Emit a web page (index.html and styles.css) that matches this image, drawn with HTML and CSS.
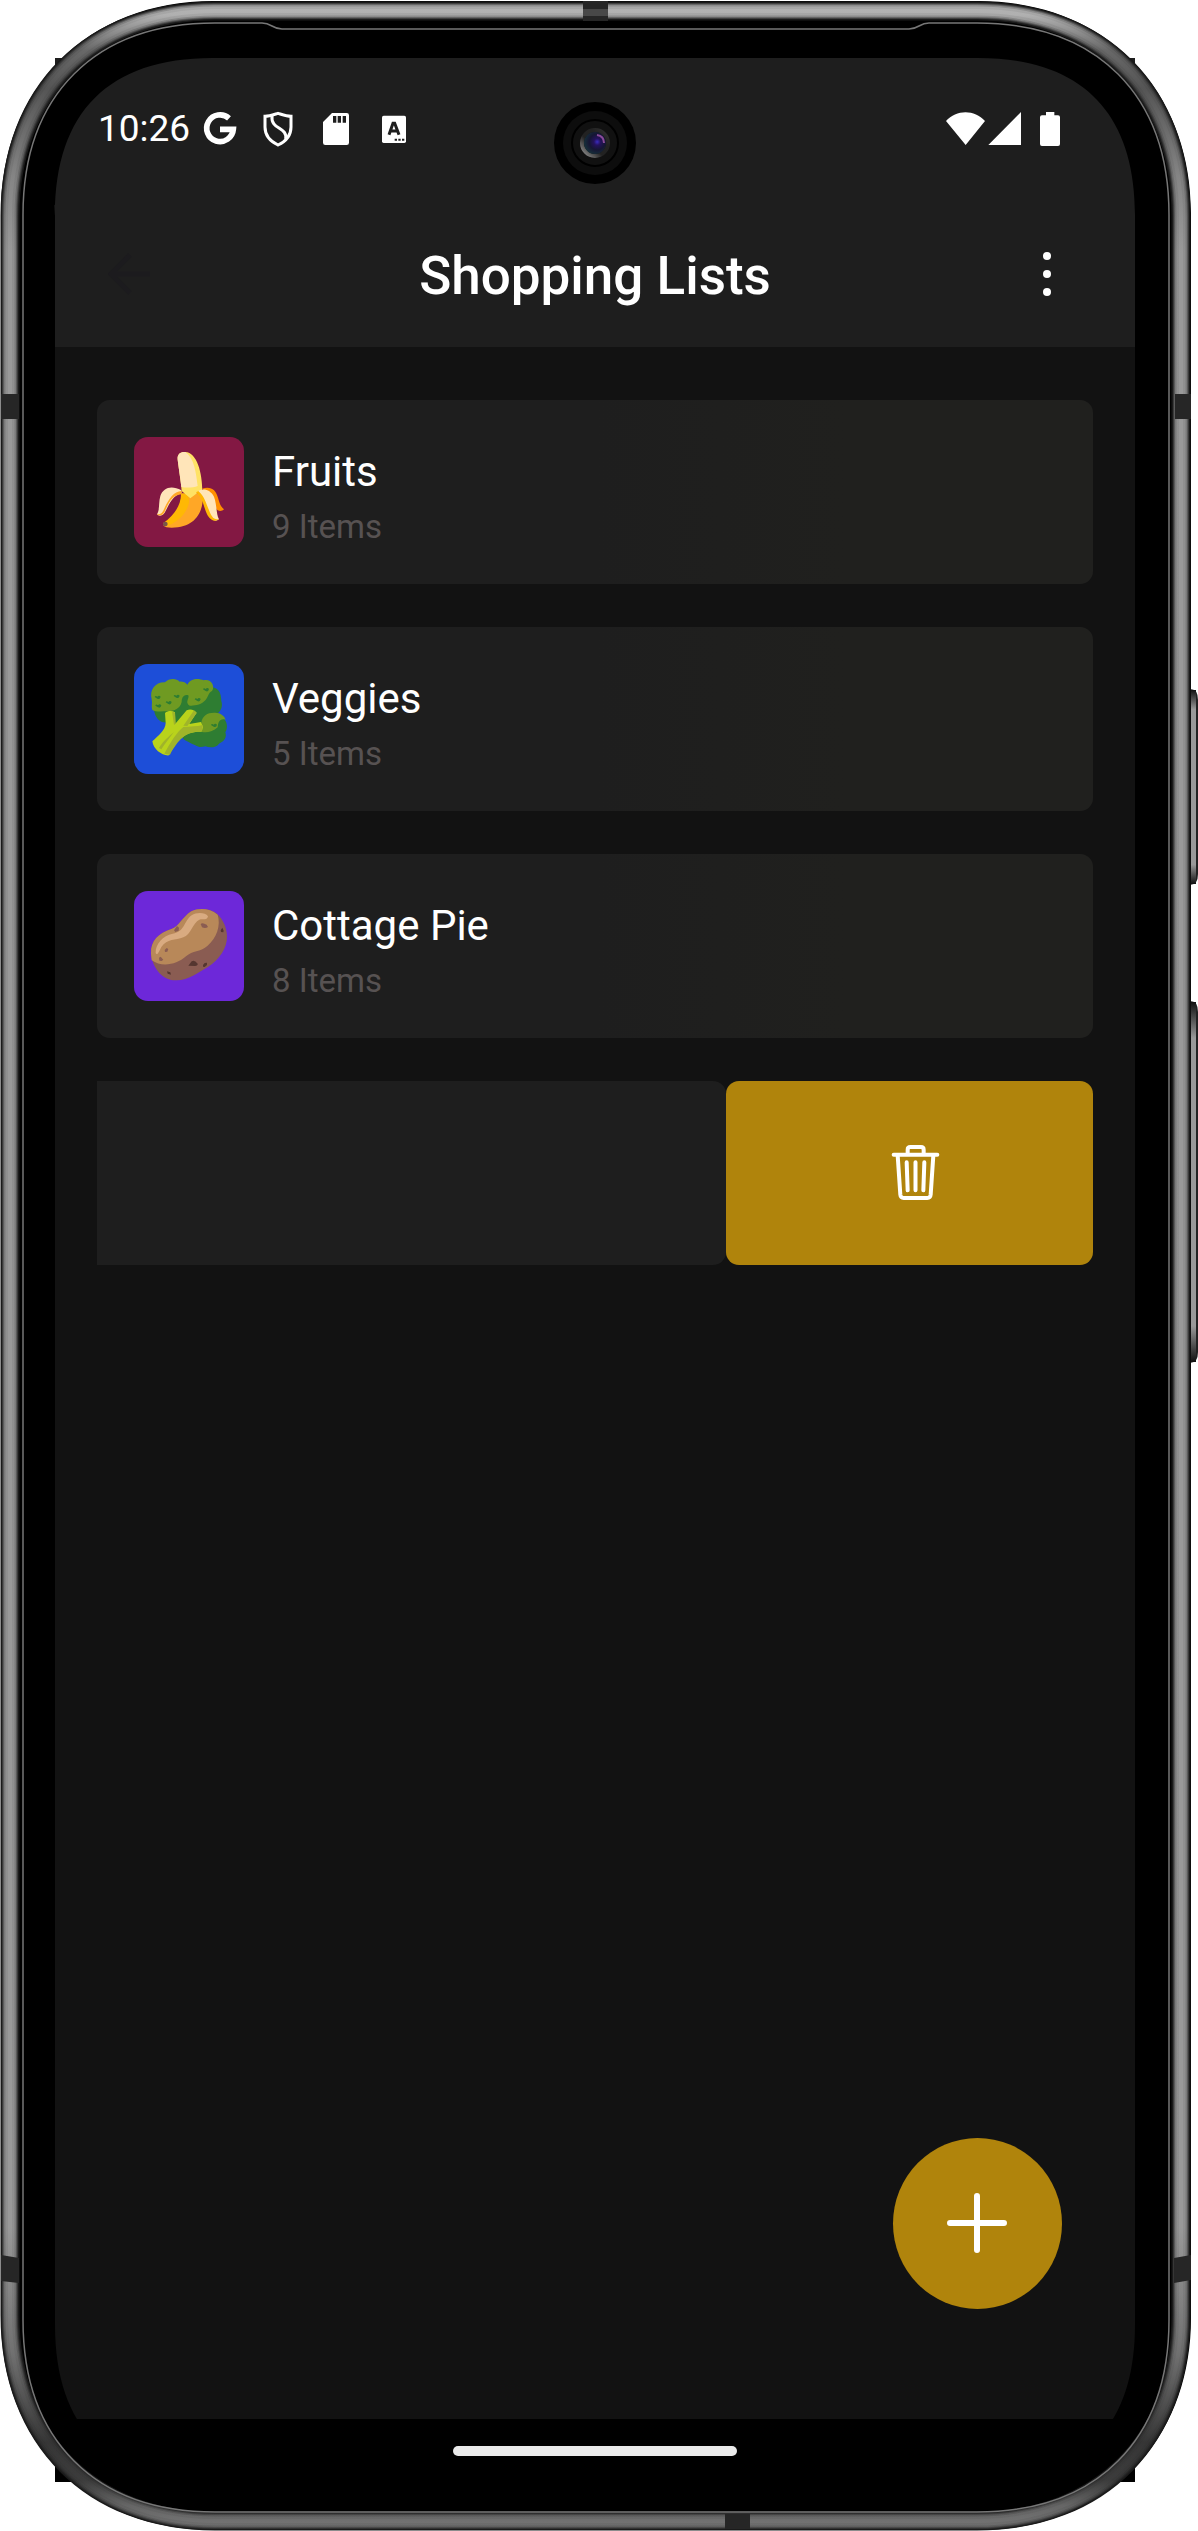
FILE: index.html
```html
<!DOCTYPE html>
<html lang="en">
<head>
<meta charset="utf-8">
<meta name="viewport" content="width=device-width, initial-scale=1">
<title>Shopping Lists</title>
<link rel="stylesheet" href="styles.css">
</head>
<body>
<div class="phone">
  <div class="screen">
    <header class="header">
      <div class="status">
        <time class="clock">10:26</time>
        <div class="status-icons">
          <svg class="status-icon" viewBox="606 333 108 108" aria-hidden="true"><path d="M687 355A40 40 0 1 0 700 388H660" fill="none" stroke="#fff" stroke-width="17"/></svg>
          <svg class="status-icon" viewBox="781 334 108 108" aria-hidden="true"><g fill="none" stroke="#fff" stroke-width="9"><path d="M835 341C822 345 809 350 796 350V382C796 408 814 426 835 436C857 426 874 408 874 382V350C861 350 848 345 835 341Z"/><path d="M817 347C812 392 864 380 858 418"/></g></svg>
          <svg class="status-icon" viewBox="954 333 108 108" aria-hidden="true"><path fill="#fff" fill-rule="evenodd" d="M996 339H1040Q1047 339 1047 346V428Q1047 435 1040 435H976Q969 435 969 428V366ZM999 348V368H1009V348ZM1013 348V368H1023V348ZM1028 348V368H1038V348Z"/></svg>
          <svg class="status-icon" viewBox="18 47 108 108" aria-hidden="true"><rect x="36" y="61" width="72" height="82" rx="5" fill="#fff"/><path d="M57 118L69 84H74L87 118M62 107H82" fill="none" stroke="#1e1e1e" stroke-width="9"/><path d="M74 130h7v6h-7zM85 130h7v6h-7zM96 130h7v6h-7z" fill="#1e1e1e"/></svg>
        </div>
        <svg class="signals" viewBox="444 333 342 108" aria-hidden="true"><path fill="#fff" d="M444 363C475 328 530 328 561 363L503 435ZM669 336V435H571ZM744 336H769V346H780Q786 346 786 352V432Q786 438 780 438H732Q726 438 726 432V352Q726 346 732 346H744Z"/></svg>
      </div>
      <div class="appbar">
        <button class="bar-button" type="button" aria-label="Back"><svg class="back-icon" viewBox="0 0 42 42" aria-hidden="true"><path d="M42 21H4M22 2L3 21L22 40" fill="none" stroke="#1c1b1e" stroke-width="5"/></svg></button>
        <h1 class="title">Shopping Lists</h1>
        <button class="bar-button bar-button-end" type="button" aria-label="More options"><svg class="more-icon" viewBox="0 0 10 46" aria-hidden="true"><g fill="#fff"><circle cx="5" cy="5" r="4"/><circle cx="5" cy="23" r="4"/><circle cx="5" cy="41" r="4"/></g></svg></button>
      </div>
    </header>

    <main class="content">
      <ul class="lists">
        <li class="card">
          <svg class="tile tile-fruits" viewBox="162 171 330 330" role="img" aria-label="Banana">
            <path d="M366 326C393 318 407 329 414 353C419 369 420 377 432 388C425 396 412 394 408 385L391 347Z" fill="#ff8f00"/>
            <path d="M303 340L368 340C372 385 354 443 275 443C263 443 254 442 250 436C284 414 303 384 305 340Z" fill="#ffa726"/>
            <path d="M303 342C321 337 331 351 326 372C318 403 291 428 260 438L249 430C280 407 303 379 303 342Z" fill="#ffb804"/>
            <path d="M293 239C291 222 302 215 316 216C351 218 367 278 367 335L353 338L331 355L305 333C303 302 296 266 293 239Z" fill="#ffe265"/>
            <path d="M293 239C291 222 302 215 316 216C344 236 348 280 353 318C341 323 318 324 304 321Z" fill="#ffe5b9"/>
            <path d="M304 331C275 315 250 322 241 348C235 370 240 388 231 403C236 410 248 408 254 398C268 374 276 347 305 340Z" fill="#ffe5b9"/>
            <path d="M232 405C250 410 253 397 259 384C269 362 281 344 305 343V333C281 334 267 357 255 381C249 395 244 405 232 402Z" fill="#ffa726"/>
            <path d="M352 335C368 322 391 328 402 350C411 374 408 402 417 418C407 426 396 421 389 409C378 383 371 350 352 335Z" fill="#ffe5b9"/>
            <path d="M348 337L355 333C378 352 382 387 396 409C402 418 409 419 416 417C409 426 393 423 384 408C372 389 370 353 348 337Z" fill="#ffb804"/>
            <circle cx="256" cy="432" r="7" fill="#795548"/>
          </svg>
          <div class="card-text"><h2 class="card-title">Fruits</h2><p class="card-count">9 Items</p></div>
        </li>
        <li class="card">
          <svg class="tile tile-veggies" viewBox="162 162 330 330" role="img" aria-label="Broccoli">
            <path d="M222 300C226 326 242 341 264 337L314 390C330 398 336 402 346 406C357 414 368 411 376 409C390 414 409 413 417 401C434 394 441 381 436 367C445 352 441 335 430 324L411 311C423 304 429 289 424 273C423 249 417 235 397 232L260 250Z" fill="#2e7d32"/>
            <path d="M215 268C208 239 226 216 255 217C265 205 289 203 299 215C308 214 317 218 322 224C332 204 356 204 371 211C391 204 407 227 396 243C384 249 385 261 376 271C365 284 344 288 329 287C313 278 329 265 325 256C310 251 305 265 305 276C300 297 280 304 263 304C244 304 226 306 217 300C213 289 218 279 215 268Z" fill="#6f9a22"/>
            <path d="M364 339C366 316 384 307 405 308C422 308 434 318 437 329C419 323 414 338 413 352C399 366 380 369 366 366Z" fill="#6f9a22"/>
            <path d="M217 394C235 377 256 361 257 339L255 309C265 301 276 302 285 307L286 341L320 301C331 295 344 300 350 308L328 342L363 336L369 351L365 365C314 363 292 389 267 436C246 438 220 418 217 394Z" fill="#b9d31b"/>
            <path d="M276 304L285 308L287 341L282 345ZM342 301L350 309L322 348L310 347ZM310 351C330 349 350 350 368 345L366 364C315 365 295 389 270 434L253 431C270 400 290 366 310 351ZM237 414C249 392 269 378 282 365C269 385 256 397 244 418Z" fill="#a0b42a"/>
            <g fill="#2e7d32"><path id="floret" d="M224 261Q226 255 232 260Q237 254 242 260Q240 270 232 266Z"/><use href="#floret" x="57" y="-3"/><use href="#floret" x="33" y="16"/><use href="#floret" x="2" y="26"/><use href="#floret" x="120" y="7"/><use href="#floret" x="145" y="-23"/><use href="#floret" x="169" y="84"/></g>
          </svg>
          <div class="card-text"><h2 class="card-title">Veggies</h2><p class="card-count">5 Items</p></div>
        </li>
        <li class="card">
          <svg class="tile tile-pie" viewBox="162 150 330 330" role="img" aria-label="Potato">
            <path d="M213 338C211 299 236 276 274 264C298 256 306 229 334 211C356 200 389 201 409 217C432 237 440 263 441 285C442 322 418 355 384 378C352 395 327 418 290 418C253 420 219 388 213 338Z" fill="#8a5c52"/>
            <path d="M213 338C211 299 236 276 274 264C298 256 306 229 334 211C356 200 389 201 413 221C423 254 410 290 382 315C360 334 338 328 318 346C290 371 246 380 215 358Z" fill="#b88859"/>
            <path d="M227 335C226 309 249 284 278 278C315 273 311 240 335 223C350 213 376 214 384 226C382 239 369 233 358 236C338 245 333 281 310 289C286 299 262 292 244 318Q236 335 233 338Q228 341 227 335Z" fill="#d9ab81"/>
            <path d="M282 268L291 255L297 260L296 269L286 273ZM362 249Q367 243 380 251L384 258Q376 264 366 259ZM254 327L260 321L265 324L262 332L255 333ZM237 350L242 347L250 356L245 360L238 359Z" fill="#8a5c52"/>
            <path d="M325 374L335 361Q343 355 353 368Q354 374 345 375ZM369 372L374 366L381 365L381 372L374 378L369 377ZM261 391L271 394L273 401L263 398ZM422 268L427 260L431 269L430 274L423 273Z" fill="#553630"/>
          </svg>
          <div class="card-text"><h2 class="card-title">Cottage Pie</h2><p class="card-count">8 Items</p></div>
        </li>
        <li class="swiped">
          <div class="swiped-card"></div>
          <button class="delete" type="button" aria-label="Delete list"><svg class="trash" viewBox="633 309 147 171" aria-hidden="true"><g fill="none" stroke="#fff" stroke-width="12" stroke-linecap="round" stroke-linejoin="round"><path d="M641 341H772M683 338V326Q683 318 691 318H723Q731 318 731 326V338M653 343L661 461Q662 471 671 471H742Q751 471 752 461L760 343M680 364L683 448M706.500 364V448M733 364L730 448"/></g></svg></button>
        </li>
      </ul>
      <button class="add" type="button" aria-label="Add list"><svg class="plus" viewBox="0 0 60 60" aria-hidden="true"><path d="M30 3V57M3 30H57" stroke="#fff" stroke-width="6" stroke-linecap="round"/></svg></button>
    </main>
    <div class="navbar"><div class="handle"></div></div>
  </div>

  <svg class="frame" viewBox="0 0 1198 2531" preserveAspectRatio="none" aria-hidden="true">
    <defs>
      <linearGradient id="metal" gradientUnits="userSpaceOnUse" x1="0" y1="0" x2="0" y2="2531">
        <stop offset="0" stop-color="#b4b4b4"/><stop offset=".006" stop-color="#b0b0b0"/><stop offset=".02" stop-color="#686868"/><stop offset=".035" stop-color="#555"/><stop offset=".07" stop-color="#858585"/><stop offset=".1" stop-color="#999"/><stop offset=".88" stop-color="#999"/><stop offset=".93" stop-color="#707070"/><stop offset=".965" stop-color="#363636"/><stop offset=".98" stop-color="#3c3c3c"/><stop offset=".99" stop-color="#666"/><stop offset="1" stop-color="#777"/>
      </linearGradient>
      <linearGradient id="key" x1="0" x2="0" y1="0" y2="1"><stop offset="0" stop-color="#111"/><stop offset=".1" stop-color="#999"/><stop offset=".9" stop-color="#999"/><stop offset="1" stop-color="#111"/></linearGradient>
      <path id="rim" d="M215 11H977C1101 11 1181 92 1181 216V2315C1181 2439 1101 2521 977 2521H215C91 2521 10 2439 10 2315V216C10 92 91 11 215 11Z"/>
    </defs>
    <path d="M1190 689Q1198 689 1198 700V874Q1198 885 1190 885ZM1190 1001Q1198 1001 1198 1012V1352Q1198 1363 1190 1363Z" fill="#222"/>
    <rect x="1191" y="690" width="5" height="194" fill="url(#key)"/>
    <rect x="1191" y="1002" width="5" height="360" fill="url(#key)"/>
    <path fill="#000" fill-rule="evenodd" d="M213 1H979C1104 1 1191 88 1191 213V2318C1191 2443 1104 2530 979 2530H213C88 2530 1 2443 1 2318V213C1 88 88 1 213 1ZM212 58C109 58 55 112 55 215V2325C55 2428 109 2482 212 2482H978C1081 2482 1135 2428 1135 2325V215C1135 112 1081 58 978 58Z"/>
    <g fill="none">
      <use href="#rim" stroke="#1a1a1a" stroke-width="19"/>
      <g stroke="url(#metal)">
        <use href="#rim" stroke-width="16" opacity=".25"/>
        <use href="#rim" stroke-width="14" opacity=".35"/>
        <use href="#rim" stroke-width="12" opacity=".5"/>
        <use href="#rim" stroke-width="9" opacity=".7"/>
        <use href="#rim" stroke-width="4"/>
      </g>
      <path d="M215 23H262C272 23 272 29 282 29H909C919 29 919 23 929 23H977C1097 23 1169 95 1169 215V2320C1169 2440 1097 2512 977 2512H215C95 2512 23 2440 23 2320V215C23 95 95 23 215 23Z" stroke="#777" stroke-width="1.500"/>
    </g>
    <g fill="#262626">
      <path d="M583 1h25v20h-25zM1175 394h16v25h-16zM1 394h18v25H1zM1 2255L19 2258V2283L1 2281ZM1174 2258L1191 2255V2280L1174 2283ZM725 2514h25v15h-25z"/>
    </g>
    <path d="M583 9h25v7h-25z" fill="#484848"/>
  </svg>

  <svg class="camera" viewBox="0 0 82 82" aria-hidden="true">
    <defs><radialGradient id="lens" cx=".6" cy=".45" r=".6"><stop offset="0" stop-color="#3a2cc0"/><stop offset=".25" stop-color="#25125e"/><stop offset=".6" stop-color="#161634"/><stop offset="1" stop-color="#16303a"/></radialGradient>
    <linearGradient id="glint" x1="0" y1="1" x2="1" y2="0"><stop offset="0" stop-color="#999"/><stop offset=".4" stop-color="#222"/><stop offset=".7" stop-color="#222"/><stop offset="1" stop-color="#333"/></linearGradient></defs>
    <circle cx="41" cy="41" r="41" fill="#000"/><circle cx="41" cy="41" r="32" fill="#0d0d0d"/><circle cx="41" cy="41" r="23" fill="#111" stroke="#000" stroke-width="2"/><circle cx="41" cy="41" r="13" fill="none" stroke="url(#glint)" stroke-width="4"/><circle cx="41" cy="41" r="11" fill="url(#lens)"/><path d="M43 33Q50 34 50 41" fill="none" stroke="#8a4a9a" stroke-width="2"/>
  </svg>
</div>
</body>
</html>
```
FILE: styles.css
```css
* {
  box-sizing: border-box;
}

body {
  margin: 0;
  background: #fff;
  color: #fff;
  font-family: Roboto, "Liberation Sans", sans-serif;
}

h1,
h2,
p,
ul {
  margin: 0;
  padding: 0;
}

button {
  border: 0;
  padding: 0;
  background: none;
  color: inherit;
  font: inherit;
  cursor: pointer;
}

svg {
  display: block;
}

.phone {
  position: relative;
  display: flex;
  min-height: 100vh;
  padding: 58px 63px 49px 55px;
}

.screen {
  flex: 1;
  display: flex;
  flex-direction: column;
  background: #121212;
}

/* Bezel drawn over the square corners of the screen */
.frame {
  position: absolute;
  inset: 0;
  width: 100%;
  height: 100%;
  pointer-events: none;
}

.camera {
  position: absolute;
  top: 102px;
  left: calc(50% - 45px);
  width: 82px;
  height: 82px;
}

.header {
  background: #1e1e1e;
}

.status {
  display: flex;
  align-items: center;
  height: 142px;
  padding: 0 75px 0 43px;
}

.clock {
  font-size: 37px;
  line-height: 44px;
}

.status-icons {
  display: flex;
  gap: 22px;
  margin-left: 12px;
}

.status-icon {
  width: 36px;
  height: 36px;
}

.signals {
  width: 114px;
  height: 36px;
  margin-left: auto;
}

.appbar {
  display: grid;
  grid-template-columns: 1fr auto 1fr;
  align-items: center;
  height: 147px;
  padding: 0 53px;
}

.bar-button {
  display: flex;
  justify-self: start;
}

.bar-button-end {
  justify-self: end;
  padding: 0 30px;
}

.back-icon {
  width: 42px;
  height: 42px;
}

.more-icon {
  width: 10px;
  height: 46px;
}

.title {
  padding-top: 4px;
  font-size: 53px;
  font-weight: 500;
  line-height: 64px;
}

.content {
  position: relative;
  flex: 1;
  padding: 53px 42px;
}

.lists {
  display: flex;
  flex-direction: column;
  gap: 43px;
  list-style: none;
}

.card {
  display: flex;
  align-items: center;
  gap: 28px;
  min-height: 184px;
  padding: 37px;
  border-radius: 13px;
  background: linear-gradient(to right, #1e1e1e 50%, #20201e 75%);
}

.tile {
  width: 110px;
  height: 110px;
  border-radius: 14px;
}

.tile-fruits {
  background: #831843;
}

.tile-veggies {
  background: #1d4ed8;
}

.tile-pie {
  background: #6d28d9;
}

.card-title {
  font-size: 42px;
  font-weight: 400;
  line-height: 70px;
}

.card-count {
  color: #575252;
  font-size: 33px;
  line-height: 40px;
}

.swiped {
  display: flex;
  min-height: 184px;
}

.swiped-card {
  flex: 1;
  border-radius: 0 13px 13px 0;
  background: #1e1e1e;
}

.delete {
  display: flex;
  align-items: center;
  justify-content: center;
  width: 367px;
  padding: 0 0 2px 12px;
  border-radius: 13px;
  background: #b0840c;
}

.trash {
  width: 49px;
  height: 57px;
}

.add {
  position: absolute;
  right: 73px;
  bottom: 110px;
  display: flex;
  align-items: center;
  justify-content: center;
  width: 169px;
  height: 171px;
  padding: 0 2px 2px 0;
  border-radius: 50%;
  background: #b0840c;
}

.plus {
  width: 60px;
  height: 60px;
}

.navbar {
  display: flex;
  align-items: center;
  justify-content: center;
  height: 63px;
  padding-top: 1px;
  background: #000;
}

.handle {
  width: 284px;
  height: 10px;
  border-radius: 5px;
  background: #eaeaea;
}
```
